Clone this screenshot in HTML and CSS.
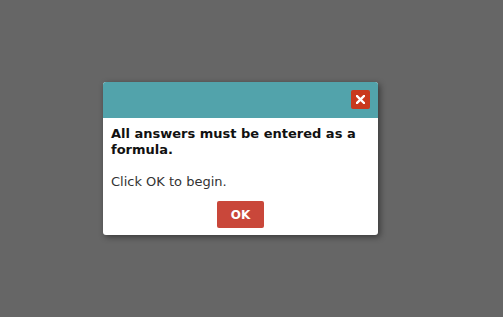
FILE: index.html
```html
<!DOCTYPE html>
<html>
<head>
<meta charset="utf-8">
<link rel="stylesheet" href="styles.css">
</head>
<body>
<div class="overlay">
  <div class="dialog">
    <div class="header">
      <button class="close" aria-label="Close">
        <svg width="9" height="9" viewBox="0 0 9 9"><path d="M1 1 L8 8 M8 1 L1 8" stroke="#fff" stroke-width="2.4" stroke-linecap="square"/></svg>
      </button>
    </div>
    <div class="content">
      <p class="title">All answers must be entered as a formula.</p>
      <p class="msg">Click OK to begin.</p>
      <div class="actions"><button class="ok">OK</button></div>
    </div>
  </div>
</div>
</body>
</html>
```
FILE: styles.css
```css
html, body {
  margin: 0;
  padding: 0;
  height: 100%;
}
body {
  background: #666666;
  font-family: "DejaVu Sans", Verdana, sans-serif;
}
.overlay {
  height: 100%;
  display: flex;
  align-items: center;
  padding-left: 103px;
}
.dialog {
  width: 275px;
  background: #fff;
  border-radius: 3px;
  box-shadow: 2px 2px 6px rgba(0,0,0,0.45);
  overflow: hidden;
}
.header {
  height: 36px;
  background: #52a3ab;
  display: flex;
  justify-content: flex-end;
  align-items: flex-start;
  padding: 8px 8px 0 0;
  box-sizing: border-box;
}
.close {
  width: 19px;
  height: 19px;
  border: none;
  border-radius: 2px;
  background: #c9391d;
  padding: 0;
  display: flex;
  align-items: center;
  justify-content: center;
}
.content {
  padding: 8px 8px 7px 8px;
  font-size: 13px;
  color: #333;
}
.title {
  margin: 0;
  font-weight: bold;
  line-height: 16px;
  color: #111;
}
.msg {
  margin: 16px 0 0 0;
  line-height: 16px;
}
.actions {
  display: flex;
  justify-content: center;
  margin-top: 11px;
}
.ok {
  width: 47px;
  height: 27px;
  border: none;
  border-radius: 2px;
  background: #c9473a;
  color: #fff;
  font-family: "DejaVu Sans", Verdana, sans-serif;
  font-weight: bold;
  font-size: 12px;
  padding: 0;
}
```
